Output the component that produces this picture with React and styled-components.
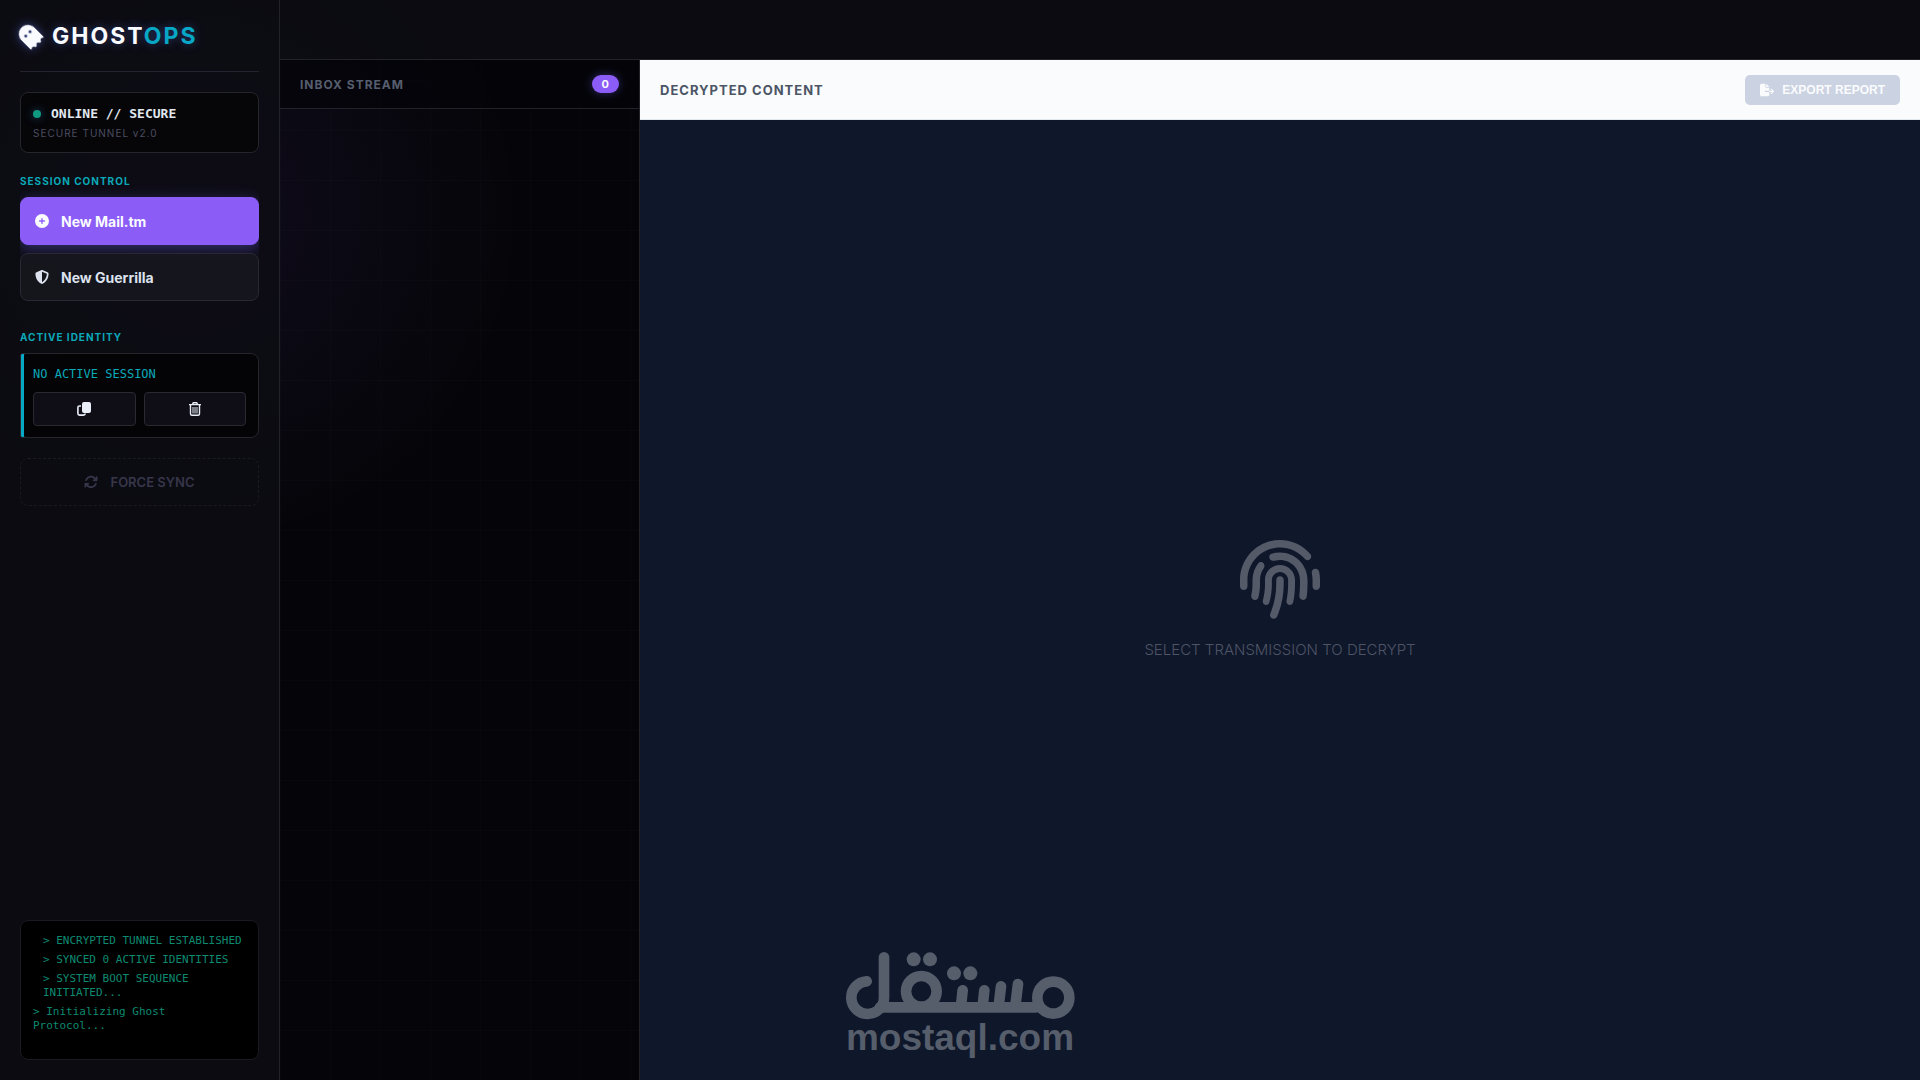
import React from "react";
import styled, { createGlobalStyle } from "styled-components";
import {
  FaArrowsRotate,
  FaCirclePlus,
  FaFileExport,
  FaFingerprint,
  FaGhost,
  FaShieldHalved,
} from "react-icons/fa6";

const GlobalStyle = createGlobalStyle`
  * {
    box-sizing: border-box;
  }

  body {
    margin: 0;
    background-color: #050509;
    color: #e2e8f0;
    font-family: Inter, "Liberation Sans", sans-serif;
  }

  button {
    font-family: inherit;
  }
`;

const Container = styled.div`
  display: flex;
  min-height: 100vh;
  background: radial-gradient(
      circle at 10% 20%,
      rgba(139, 92, 246, 0.08),
      transparent 330px
    ),
    #050509;
`;

const Sidebar = styled.aside`
  display: flex;
  flex-direction: column;
  flex: 0 0 280px;
  padding: 0 20px 20px;
  border-right: 1px solid #222229;
  background-color: rgba(13, 14, 20, 0.75);
`;

const Logo = styled.h1`
  display: flex;
  align-items: center;
  gap: 10px;
  height: 72px;
  margin: 0 0 20px;
  border-bottom: 1px solid #24222e;
  color: #fafbff;
  font-size: 23px;
  font-weight: 700;
  letter-spacing: 2px;
  text-shadow: 0 0 10px rgba(100, 130, 255, 0.4);

  svg {
    margin-left: -2px;
    font-size: 24px;
    transform: rotate(-45deg);
    filter: drop-shadow(0 0 5px rgba(100, 130, 255, 0.5));
  }

  span span {
    color: #06a8c6;
  }
`;

const StatusCard = styled.div`
  height: 61px;
  margin-bottom: 20px;
  padding: 11px 12px;
  border: 1px solid #25252b;
  border-radius: 8px;
  background-color: #060609;
`;

const StatusLine = styled.div`
  display: flex;
  align-items: center;
  gap: 10px;
  font-family: "DejaVu Sans Mono", monospace;
  font-size: 13px;
  font-weight: 700;
  line-height: 20px;
`;

const StatusDot = styled.span`
  width: 8px;
  height: 8px;
  border-radius: 50%;
  background-color: #109981;
  box-shadow: 0 0 8px rgba(40, 100, 160, 0.6);
`;

const StatusNote = styled.div`
  color: #4b4d60;
  font-size: 10px;
  letter-spacing: 1px;
  line-height: 18px;
`;

const Section = styled.section`
  display: flex;
  flex-direction: column;
  gap: 8px;
  overflow: hidden;
  margin-bottom: ${(props) => (props.$spaced ? "28px" : "20px")};
`;

const SectionTitle = styled.h2`
  margin: 0;
  color: #0ba9b9;
  font-size: 10px;
  font-weight: 700;
  letter-spacing: 1px;
  line-height: 16px;
`;

const SessionButton = styled.button`
  display: flex;
  flex: 0 0 48px;
  align-items: center;
  gap: 12px;
  padding: 0 14px;
  border: 1px solid ${(props) => (props.$primary ? "#8b5cf6" : "#292935")};
  border-radius: 8px;
  background-color: ${(props) =>
    props.$primary ? "#8b5cf6" : "rgba(24, 23, 31, 0.85)"};
  box-shadow: ${(props) =>
    props.$primary ? "0 4px 15px rgba(110, 100, 246, 0.4)" : "none"};
  color: ${(props) => (props.$primary ? "#fafbff" : "#dde3ee")};
  font-size: 14px;
  font-weight: 700;
  cursor: pointer;
`;

const IdentityCard = styled.div`
  padding: 11px 12px;
  border: 1px solid #25252b;
  border-radius: 2px 8px 8px 2px;
  background-color: #040407;
  box-shadow: inset 3px 0 0 #06a8c6;
`;

const IdentityName = styled.div`
  color: #0ba9b9;
  font-family: "DejaVu Sans Mono", monospace;
  font-size: 12px;
  line-height: 18px;
`;

const IdentityActions = styled.div`
  display: grid;
  grid-template-columns: 1fr 1fr;
  gap: 8px;
  margin-top: 9px;
`;

const IconButton = styled.button`
  display: flex;
  align-items: center;
  justify-content: center;
  height: 34px;
  border: 1px solid #292930;
  border-radius: 4px;
  background-color: #0f0e17;
  color: #e9eef8;
  cursor: pointer;
`;

const SyncButton = styled.button`
  display: flex;
  align-items: center;
  justify-content: center;
  gap: 12px;
  height: 48px;
  border: 1px dashed #191a22;
  border-radius: 8px;
  background-color: transparent;
  color: #37364a;
  font-size: 13px;
  font-weight: 600;

  svg {
    font-size: 14px;
  }
`;

const LogPanel = styled.div`
  display: flex;
  flex-direction: column;
  gap: 5px;
  height: 140px;
  margin-top: auto;
  padding: 13px 16px 12px 12px;
  border: 1px solid #191a22;
  border-radius: 8px;
  background-color: #000;
`;

const LogLine = styled.div`
  margin-left: ${(props) => (props.$indent ? "10px" : "0")};
  color: #0d8a70;
  font-family: "DejaVu Sans Mono", monospace;
  font-size: 11px;
  line-height: 14px;
`;

const Main = styled.main`
  display: flex;
  flex: 1;
  flex-direction: column;
  min-width: 0;
`;

const TopBar = styled.header`
  flex: 0 0 60px;
  border-bottom: 1px solid #222229;
  background-color: rgba(13, 14, 20, 0.75);
`;

const Panels = styled.div`
  display: flex;
  flex: 1;
`;

const Inbox = styled.section`
  flex: 0 0 360px;
  border-right: 1px solid #222229;
  background-image: linear-gradient(rgba(255, 255, 255, 0.01) 1px, transparent 1px),
    linear-gradient(90deg, rgba(255, 255, 255, 0.01) 1px, transparent 1px);
  background-position: 0 20px;
  background-size: 50px 50px;
`;

const InboxHeader = styled.div`
  display: flex;
  align-items: center;
  justify-content: space-between;
  height: 49px;
  padding: 0 20px;
  border-bottom: 1px solid #222229;
  background-color: rgba(4, 4, 8, 0.6);
`;

const PanelTitle = styled.h2`
  margin: 0;
  color: ${(props) => (props.$dark ? "#4b5565" : "#565e6f")};
  font-size: ${(props) => (props.$dark ? "13px" : "12px")};
  font-weight: 700;
  letter-spacing: 1px;
`;

const Badge = styled.span`
  padding: 0 10px;
  border-radius: 10px;
  background-color: #8b5cf6;
  box-shadow: 0 0 10px rgba(110, 100, 246, 0.4);
  color: #fafbff;
  font-size: 11px;
  font-weight: 700;
  line-height: 18px;
`;

const Reader = styled.section`
  display: flex;
  flex: 1;
  flex-direction: column;
  background-color: #0f172a;
`;

const ReaderHeader = styled.div`
  display: flex;
  align-items: center;
  justify-content: space-between;
  height: 60px;
  padding: 0 20px;
  border-bottom: 1px solid #e2e8f0;
  background-color: #fafbfd;
`;

const ExportButton = styled.button`
  display: flex;
  align-items: center;
  gap: 8px;
  height: 30px;
  padding: 0 15px;
  border: none;
  border-radius: 5px;
  background-color: #cbd2e1;
  color: #fafbfd;
  font-family: "Liberation Sans", sans-serif;
  font-size: 12px;
  font-weight: 700;

  svg {
    font-size: 14px;
  }
`;

const EmptyState = styled.div`
  display: flex;
  flex: 1;
  flex-direction: column;
  align-items: center;
  justify-content: center;
  gap: 20px;
  color: #4e5466;
  font-size: 15px;
  font-weight: 300;
  line-height: 20px;

  svg {
    color: #555a69;
    font-size: 80px;
  }
`;

const Watermark = styled.div`
  position: absolute;
  bottom: 24px;
  left: 50%;
  display: flex;
  flex-direction: column;
  align-items: center;
  transform: translateX(-50%);
  color: #565d6b;
  font-family: "Liberation Sans", sans-serif;
  font-size: 37px;
  font-weight: 700;
  line-height: 36px;
  pointer-events: none;
`;

const logs = [
  { text: "> ENCRYPTED TUNNEL ESTABLISHED", indent: true },
  { text: "> SYNCED 0 ACTIVE IDENTITIES", indent: true },
  { text: "> SYSTEM BOOT SEQUENCE INITIATED...", indent: true },
  { text: "> Initializing Ghost Protocol...", indent: false },
];

const CopyIcon = () => (
  <svg width="14" height="14" viewBox="0 0 14 14" aria-hidden="true">
    <rect x="5" y="0" width="9" height="11" rx="2" fill="currentColor" />
    <path
      d="M4 4H2.5Q.9 4 .9 5.5V11.5Q.9 13.1 2.5 13.1H6.5Q8.2 13.1 8.2 11.5"
      fill="none"
      stroke="currentColor"
      strokeWidth="1.6"
    />
  </svg>
);

const TrashIcon = () => (
  <svg width="12" height="14" viewBox="0 0 12 14" aria-hidden="true">
    <g fill="none" stroke="currentColor">
      <path d="M0 2.6H12M3.5 2.4L4.3.7H7.7L8.5 2.4" strokeWidth="1.4" />
      <path
        d="M1.5 3V11.8Q1.5 13.3 3 13.3H9Q10.5 13.3 10.5 11.8V3"
        strokeWidth="1.4"
      />
      <path d="M4 5V11.5M6 5V11.5M8 5V11.5" strokeWidth="1" />
    </g>
  </svg>
);

const MostaqlMark = () => (
  <svg width="232" height="68" viewBox="72 66 696 204" aria-hidden="true">
    <g fill="none" stroke="currentColor" strokeWidth="32" strokeLinecap="round">
      <path d="M140 154A49 49 0 1 0 192 203V82" />
      <path d="M180 232H648" />
      <circle cx="304" cy="184" r="46" />
      <path d="M428 181L423 228M493 181L488 228M543 169L536 228M594 162L586 228" />
      <circle cx="700" cy="203" r="48" />
    </g>
    <g fill="currentColor">
      <circle cx="281" cy="88" r="21" />
      <circle cx="330" cy="88" r="21" />
      <circle cx="402" cy="130" r="21" />
      <circle cx="451" cy="130" r="21" />
    </g>
  </svg>
);

const App = () => {
  return (
    <Container>
      <GlobalStyle />
      <Sidebar>
        <Logo>
          <FaGhost />
          <span>
            GHOST<span>OPS</span>
          </span>
        </Logo>
        <StatusCard>
          <StatusLine>
            <StatusDot />
            ONLINE // SECURE
          </StatusLine>
          <StatusNote>SECURE TUNNEL v2.0</StatusNote>
        </StatusCard>
        <Section $spaced>
          <SectionTitle>SESSION CONTROL</SectionTitle>
          <SessionButton $primary>
            <FaCirclePlus />
            New Mail.tm
          </SessionButton>
          <SessionButton>
            <FaShieldHalved />
            New Guerrilla
          </SessionButton>
        </Section>
        <Section>
          <SectionTitle>ACTIVE IDENTITY</SectionTitle>
          <IdentityCard>
            <IdentityName>NO ACTIVE SESSION</IdentityName>
            <IdentityActions>
              <IconButton aria-label="Copy">
                <CopyIcon />
              </IconButton>
              <IconButton aria-label="Delete">
                <TrashIcon />
              </IconButton>
            </IdentityActions>
          </IdentityCard>
        </Section>
        <SyncButton disabled>
          <FaArrowsRotate />
          FORCE SYNC
        </SyncButton>
        <LogPanel>
          {logs.map((log) => (
            <LogLine key={log.text} $indent={log.indent}>
              {log.text}
            </LogLine>
          ))}
        </LogPanel>
      </Sidebar>
      <Main>
        <TopBar />
        <Panels>
          <Inbox>
            <InboxHeader>
              <PanelTitle>INBOX STREAM</PanelTitle>
              <Badge>0</Badge>
            </InboxHeader>
          </Inbox>
          <Reader>
            <ReaderHeader>
              <PanelTitle $dark>DECRYPTED CONTENT</PanelTitle>
              <ExportButton disabled>
                <FaFileExport />
                EXPORT REPORT
              </ExportButton>
            </ReaderHeader>
            <EmptyState>
              <FaFingerprint />
              SELECT TRANSMISSION TO DECRYPT
            </EmptyState>
          </Reader>
        </Panels>
      </Main>
      <Watermark>
        <MostaqlMark />
        mostaql.com
      </Watermark>
    </Container>
  );
};

export default App;
